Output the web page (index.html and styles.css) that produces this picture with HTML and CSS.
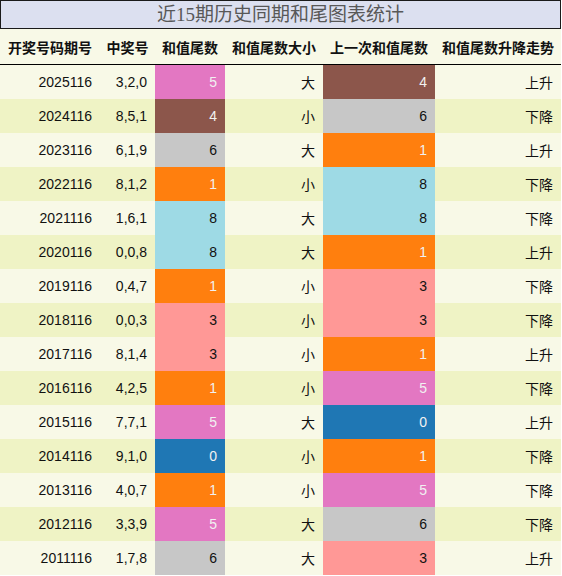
FILE: index.html
```html
<!DOCTYPE html>
<html lang="zh">
  <head>
    <meta charset="UTF-8" />
    <meta name="viewport" content="width=device-width, initial-scale=1.0" />
    <title>近15期历史同期和尾图表统计</title>
    <link rel="stylesheet" href="styles.css">
  </head>
  <body>
    <div id="container">
      <div class="title">近15期历史同期和尾图表统计</div>

      <table>
        <thead>
          <tr>
            <th class="c-issue">开奖号码期号</th>
            <th class="c-num">中奖号</th>
            <th class="c-tail">和值尾数</th>
            <th class="c-size">和值尾数大小</th>
            <th class="c-prev">上一次和值尾数</th>
            <th class="c-trend">和值尾数升降走势</th>
          </tr>
        </thead>
        <tbody>
          <tr><td>2025116</td><td>3,2,0</td><td class="d5">5</td><td>大</td><td class="d4">4</td><td>上升</td></tr>
          <tr><td>2024116</td><td>8,5,1</td><td class="d4">4</td><td>小</td><td class="d6">6</td><td>下降</td></tr>
          <tr><td>2023116</td><td>6,1,9</td><td class="d6">6</td><td>大</td><td class="d1">1</td><td>上升</td></tr>
          <tr><td>2022116</td><td>8,1,2</td><td class="d1">1</td><td>小</td><td class="d8">8</td><td>下降</td></tr>
          <tr><td>2021116</td><td>1,6,1</td><td class="d8">8</td><td>大</td><td class="d8">8</td><td>下降</td></tr>
          <tr><td>2020116</td><td>0,0,8</td><td class="d8">8</td><td>大</td><td class="d1">1</td><td>上升</td></tr>
          <tr><td>2019116</td><td>0,4,7</td><td class="d1">1</td><td>小</td><td class="d3">3</td><td>下降</td></tr>
          <tr><td>2018116</td><td>0,0,3</td><td class="d3">3</td><td>小</td><td class="d3">3</td><td>下降</td></tr>
          <tr><td>2017116</td><td>8,1,4</td><td class="d3">3</td><td>小</td><td class="d1">1</td><td>上升</td></tr>
          <tr><td>2016116</td><td>4,2,5</td><td class="d1">1</td><td>小</td><td class="d5">5</td><td>下降</td></tr>
          <tr><td>2015116</td><td>7,7,1</td><td class="d5">5</td><td>大</td><td class="d0">0</td><td>上升</td></tr>
          <tr><td>2014116</td><td>9,1,0</td><td class="d0">0</td><td>小</td><td class="d1">1</td><td>下降</td></tr>
          <tr><td>2013116</td><td>4,0,7</td><td class="d1">1</td><td>小</td><td class="d5">5</td><td>下降</td></tr>
          <tr><td>2012116</td><td>3,3,9</td><td class="d5">5</td><td>大</td><td class="d6">6</td><td>下降</td></tr>
          <tr><td>2011116</td><td>1,7,8</td><td class="d6">6</td><td>大</td><td class="d3">3</td><td>上升</td></tr>
        </tbody>
      </table>
    </div>
  </body>
</html>
```

FILE: styles.css
```css
body {
  margin: 0;
  font-family: "Liberation Sans", "Noto Sans CJK SC", sans-serif;
  font-size: 14px;
  color: #111111;
}

#container {
  width: 561px;
}

.title {
  height: 27px;
  line-height: 27px;
  border: 1px solid #1a1a1a;
  background-color: #dce0f0;
  color: #585858;
  text-align: center;
  font-family: "Liberation Serif", "Noto Sans CJK SC", serif;
  font-size: 19px;
}

table {
  width: 561px;
  border-collapse: collapse;
  table-layout: fixed;
}

th {
  height: 35px;
  padding: 0;
  font-weight: bold;
  text-align: center;
  background-color: #f8f9e7;
  border-bottom: 1px solid #000000;
}

td {
  height: 34px;
  padding: 0 8px 0 0;
  text-align: right;
}

tbody tr:nth-child(odd) {
  background-color: #f8f9e7;
}

tbody tr:nth-child(even) {
  background-color: #eff3c5;
}

.c-issue { width: 100px; }
.c-num { width: 55px; }
.c-tail { width: 70px; }
.c-size { width: 98px; }
.c-prev { width: 112px; }
.c-trend { width: 126px; }

/* tail digit colours */
.d0 { background-color: #1f77b4; color: #f1f1f1; }
.d1 { background-color: #ff7f0e; color: #f1f1f1; }
.d3 { background-color: #ff9896; color: #111111; }
.d4 { background-color: #8c564b; color: #f1f1f1; }
.d5 { background-color: #e377c2; color: #f1f1f1; }
.d6 { background-color: #c7c7c7; color: #111111; }
.d8 { background-color: #9edae5; color: #111111; }
```
